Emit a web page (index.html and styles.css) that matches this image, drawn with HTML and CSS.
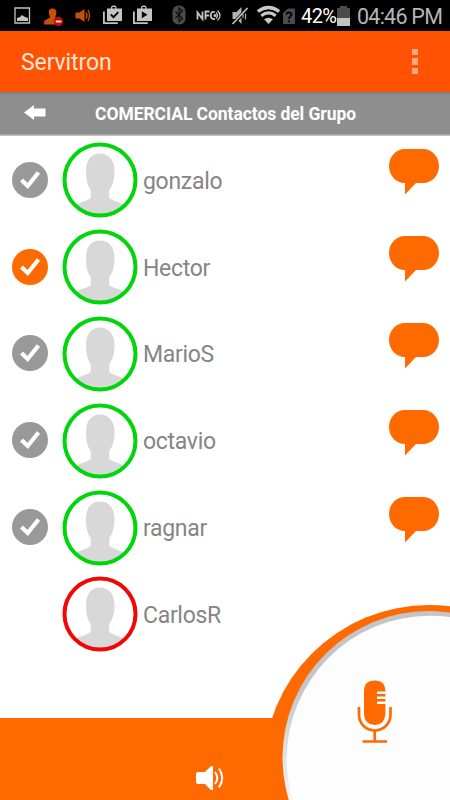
FILE: index.html
```html
<!DOCTYPE html>
<html lang="es">
<head>
<meta charset="utf-8">
<title>Servitron</title>
<link rel="stylesheet" href="styles.css">
</head>
<body>
<svg class="symbols" width="0" height="0" aria-hidden="true">
  <symbol id="check" viewBox="0 0 36 36"><circle cx="18" cy="18" r="18" fill="currentColor"/><path d="M9.500 18l6.200 6L26.500 10.500" fill="none" stroke="#fff" stroke-width="4.200"/></symbol>
  <symbol id="person" viewBox="0 0 76 76">
    <clipPath id="face"><circle cx="38" cy="38" r="35"/></clipPath>
    <circle cx="38" cy="38" r="35.700" fill="#fff"/>
    <path clip-path="url(#face)" fill="#d8d8d8" d="M38 11.500C29 11.500 24 18 24 29c0 10 2 15.500 4.700 19v8C27 58 18 60 10 65v11h56V65c-8-5-17-7-18.700-9v-8C50 44.500 52.500 39 52.500 29c0-11-5.500-17.500-14.500-17.500z"/>
    <circle cx="38" cy="38" r="35.500" fill="none" stroke="currentColor" stroke-width="4"/>
  </symbol>
  <symbol id="bubble" viewBox="0 0 50 46"><path fill="#ff6a00" d="M16 0H34C43.500 0 50 8 50 17S43.500 34 34 34H27L16 45.500V34C6.500 34 0 26 0 17S6.500 0 16 0z"/></symbol>
</svg>
<div class="phone">
  <header class="status">
    <svg width="300" height="31" viewBox="0 0 300 31" aria-hidden="true">
      <path fill="none" stroke="#c4c4c4" stroke-width="1.300" d="M15 8h14.500v15H15z"/><path fill="#c4c4c4" d="M17 21v-3l3-1 2-2 3 2 3 1v3z"/>
      <path fill="#c65005" d="M52.500 8.500c-3 0-4 2-3.600 5l1.200 4-5.600 3-.7 4h17v-5l-5.600-2 1.200-4c.4-3-.9-5-3.900-5z"/><circle cx="58.500" cy="21.500" r="4.700" fill="#b80d0d"/><path fill="#ddd" d="M55.700 20.500h5.600v2h-5.600z"/>
      <path fill="#c65005" d="M75.500 12.500h4l5-3.500v13l-5-3.500h-4z"/><path fill="none" stroke="#c65005" stroke-width="1.300" d="M86 12.500q2 3 0 6M88 10q3 5.500 0 11"/>
      <g fill="#c4c4c4"><path fill-rule="evenodd" d="M107 8.500h4V7q.5-1.500 2-1.500h1.500q1.500 0 2 1.500v1.500h5.500v12.500h-15zM112.300 8.500h2.900V7h-2.900z"/><path d="M103 11.500h1.800v10.700h13V24H103z"/></g><path fill="none" stroke="#000" stroke-width="1.800" d="M110.800 14.500l2.700 2.700 4.800-5"/>
      <g fill="#c4c4c4"><path fill-rule="evenodd" d="M137 8.500h4V7q.5-1.500 2-1.500h1.500q1.500 0 2 1.500v1.500h5.500v12.500h-15zM142.300 8.500h2.900V7h-2.900z"/><path d="M133 11.500h1.800v10.700h13V24H133z"/></g><path fill="#000" d="M141.800 11.200v7l5.700-3.500z"/>
      <rect x="172.500" y="5.500" width="13" height="19" rx="6" fill="#4b4b4b"/><path fill="none" stroke="#111" stroke-width="1.300" d="M175.500 11.500l7 7-3.500 3V8l3.500 3-7 7"/>
      <path fill="none" stroke="#c4c4c4" stroke-width="1.800" d="M197.500 19.500v-7l5 6.500v-7.500M205.500 19.500v-8h4M205.500 15.500h3.700M215 12q-4-1-4.200 3.200 0 4.500 4.200 3.800"/><circle cx="215" cy="15.500" r="1.500" fill="#c4c4c4"/><path fill="none" stroke="#c4c4c4" stroke-width="1.300" d="M216 12.500q3 3 0 6M217.500 10.500q5 5 0 10"/>
      <path fill="#b0b0b0" d="M232.500 12h4l5-5v17l-5-5h-4z"/><path stroke="#000" stroke-width="3.500" d="M232.500 24.500L247.500 8.500"/><path stroke="#c4c4c4" stroke-width="1.700" d="M232.500 24L247.500 8"/><path fill="none" stroke="#aaa" stroke-width="1.200" d="M243 14v4M245.500 13.500v6"/>
      <g fill="none" stroke="#cacaca" stroke-width="3.200"><path d="M257.800 11.500q10.700-8 21.400 0M261.300 15.700q7.200-5.500 14.400 0"/></g><path fill="#cacaca" d="M264 19.300q4.500-3.300 9 0L268.500 24z"/>
      <path fill="#4b4b4b" d="M283 13l5-4.500h7V24h-12z"/><path fill="none" stroke="#000" stroke-width="1.800" d="M286.500 14.500q.2-2 2.500-2t2.500 2q0 1.200-1.400 2.200-1.100.800-1.100 2.300M289 20.500v1.800"/>
    </svg>
    <span class="battery-text">42%</span>
    <svg class="battery" width="13" height="20" viewBox="0 0 13 20" aria-hidden="true"><path fill="#4b4b4b" d="M0 2h3V0h7v2h3v10H0z"/><path fill="#c2c2c2" d="M0 12h13v8H0z"/></svg>
    <time class="clock">04:46 PM</time>
  </header>
  <div class="appbar"><h1>Servitron</h1><div class="more"><i></i><i></i><i></i></div></div>
  <div class="group">
    <svg width="22" height="15" viewBox="0 0 22 15" aria-hidden="true"><path fill="#fff" d="M0 7.500L10 0v3.500h11.500v8H10V15z"/></svg>
    <h2>COMERCIAL Contactos del Grupo</h2>
  </div>
  <ul class="contacts">
    <li><svg class="check"><use href="#check"/></svg><svg class="avatar"><use href="#person"/></svg><span>gonzalo</span><svg class="bubble"><use href="#bubble"/></svg></li>
    <li><svg class="check selected"><use href="#check"/></svg><svg class="avatar"><use href="#person"/></svg><span>Hector</span><svg class="bubble"><use href="#bubble"/></svg></li>
    <li><svg class="check"><use href="#check"/></svg><svg class="avatar"><use href="#person"/></svg><span>MarioS</span><svg class="bubble"><use href="#bubble"/></svg></li>
    <li><svg class="check"><use href="#check"/></svg><svg class="avatar"><use href="#person"/></svg><span>octavio</span><svg class="bubble"><use href="#bubble"/></svg></li>
    <li><svg class="check"><use href="#check"/></svg><svg class="avatar"><use href="#person"/></svg><span>ragnar</span><svg class="bubble"><use href="#bubble"/></svg></li>
    <li><div class="check"></div><svg class="avatar offline"><use href="#person"/></svg><span>CarlosR</span></li>
  </ul>
  <footer class="bar">
    <svg class="speaker" width="29" height="26" viewBox="0 0 29 26" aria-hidden="true"><path fill="#fff" d="M2 7h7l6-6h2v24h-2l-6-6H2Q0 19 0 17V9Q0 7 2 7z"/><path fill="none" stroke="#fff" stroke-width="2" d="M19 7q4.500 6 0 12M23 3.500q6.500 9.500 0 19"/></svg>
  </footer>
  <svg class="talk" width="190" height="205" viewBox="260 595 190 205" aria-hidden="true">
    <defs><linearGradient id="rim" gradientUnits="userSpaceOnUse" x1="0" y1="690" x2="0" y2="800"><stop stop-color="#c3c5c9"/><stop offset="1" stop-color="#f5f5f5"/></linearGradient></defs>
    <circle cx="429" cy="770.600" r="165.600" fill="#ff6a00"/>
    <circle cx="429" cy="757.500" r="146.500" fill="url(#rim)"/>
    <circle cx="430" cy="759" r="143.300" fill="#fdfdfd"/>
    <path fill="#ff6a00" d="M364 691.500q0-11 10.700-11t10.700 11h-8.400v2.500h8.400v2.500h-8.400v2.500h8.400v2.500h-8.400v2.500h8.400V714q-.7 11-10.700 11T364 714z"/>
    <path fill="none" stroke="#ff6a00" stroke-width="2.700" d="M359 707v7.500C359 724 366 730.500 374.700 730.500S390.500 724 390.500 714.500V707M374.700 730v11M362.500 741.500H387"/>
  </svg>
</div>
</body>
</html>
```

FILE: styles.css
```css
* { box-sizing: border-box; }
body { margin: 0; font-family: Roboto, sans-serif; }
.symbols { position: absolute; }
.phone { position: relative; width: 450px; height: 800px; overflow: hidden; background: #fff; display: flex; flex-direction: column; }
.status { height: 31px; flex: none; display: flex; align-items: center; background: #000; white-space: nowrap; }
.status > svg { flex: none; }
.battery-text { width: 36px; padding-left: 1px; margin-top: 1px; color: #fff; font-size: 20px; letter-spacing: -.6px; }
.battery { margin-left: 1px; }
.clock { margin: 1px 0 0 7px; color: #b5b5b5; font-size: 21.500px; letter-spacing: -.75px; }
.appbar { height: 61px; flex: none; display: flex; align-items: center; justify-content: space-between; padding: 2px 32px 0 21px; background: #ff5202; }
h1 { margin: 0; color: #ffe5da; font-size: 23px; font-weight: 400; letter-spacing: -.1px; }
.more { display: grid; gap: 3px; margin-top: -2px; }
.more i { width: 6px; height: 6.300px; background: #ffa781; }
.group { height: 44px; flex: none; display: flex; align-items: center; padding-left: 24px; background: linear-gradient(#7c7c7c, #8e8e8e 4px, #8e8e8e 42px, #c0c0c0 43px); }
.group svg { margin-top: -3px; }
h2 { margin: 0 0 0 49px; color: #fff; font-size: 17.500px; font-weight: 700; letter-spacing: -.06px; white-space: nowrap; }
.contacts { list-style: none; margin: 0; padding: 1px 0 0; height: 582px; flex: none; }
.contacts li { height: 86.800px; display: flex; align-items: center; padding: 0 11px 0 12px; }
.check { width: 36px; height: 36px; margin-top: -1.500px; color: #999; }
.selected { margin-top: 0; color: #ff6a00; }
.avatar { width: 76px; height: 76px; margin-left: 14px; color: #00d60a; }
.offline { color: #f20606; }
.contacts span { flex: 1; margin: 2px 0 0 5px; color: #858585; font-size: 23px; letter-spacing: -.3px; }
.bubble { width: 50px; height: 46px; margin-top: -16px; }
.bar { flex: 1; display: flex; align-items: flex-end; padding: 0 0 9px 196px; background: #ff6a00; }
.talk { position: absolute; right: 0; bottom: 0; }
```
